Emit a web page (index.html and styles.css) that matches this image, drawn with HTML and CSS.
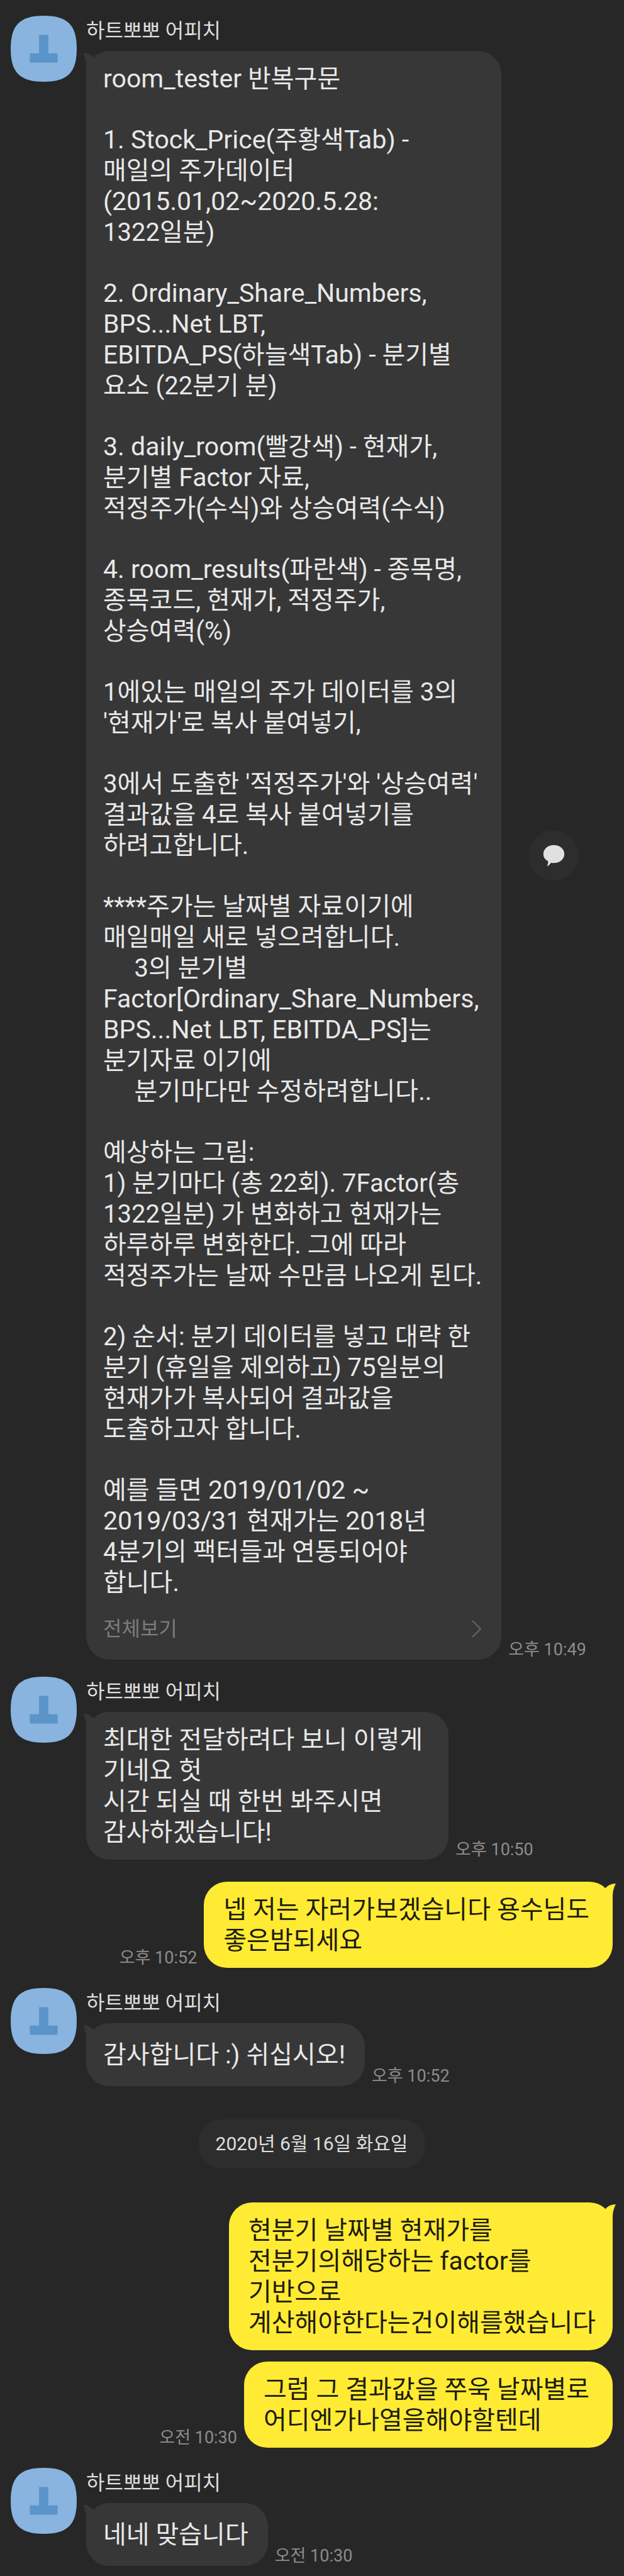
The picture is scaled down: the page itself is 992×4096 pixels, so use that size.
FILE: index.html
```html
<!DOCTYPE html>
<html lang="ko">
<head>
<meta charset="utf-8">
<meta name="viewport" content="width=device-width, initial-scale=1">
<title>하트뽀뽀 어피치</title>
<link rel="stylesheet" href="styles.css">
</head>
<body>
<svg class="defs" aria-hidden="true">
  <symbol id="avatar" viewBox="0 0 114 114">
    <path fill="#88b4df" d="M57 0C98 0 114 16 114 57S98 114 57 114 0 98 0 57 16 0 57 0Z"/>
    <path fill="#5b94c9" d="M49 33H65V65H81V81H33V65H49Z"/>
  </symbol>
  <symbol id="tail" viewBox="-6 0 24 40">
    <path fill="currentColor" d="M-5 3C2 3 8 6 11 10L16 38H0V24C0 15-2 9-5 3Z"/>
  </symbol>
</svg>
<main class="chat">
  <article class="message">
    <svg class="avatar" role="img" aria-label="프로필"><use href="#avatar"/></svg>
    <div class="content">
      <h2 class="name">하트뽀뽀 어피치</h2>
      <div class="line">
        <div class="bubble long">
          <svg class="tail" aria-hidden="true"><use href="#tail"/></svg>
          <div class="paragraphs">
            <p class="text"><span class="row"><span class="latin">room_tester</span> 반복구문</span></p>
            <p class="text"><span class="row"><span class="latin">1. Stock_Price(</span>주황색<span class="latin">Tab) -</span></span><span class="row">매일의 주가데이터</span><span class="row latin">(2015.01,02~2020.5.28:</span><span class="row">1322일분)</span></p>
            <p class="text"><span class="row latin">2. Ordinary_Share_Numbers,</span><span class="row latin">BPS...Net LBT,</span><span class="row"><span class="latin">EBITDA_PS(</span>하늘색<span class="latin">Tab) -</span> 분기별</span><span class="row">요소 (22분기 분)</span></p>
            <p class="text"><span class="row"><span class="latin">3. daily_room(</span>빨강색) - 현재가,</span><span class="row">분기별 <span class="latin">Factor</span> 자료,</span><span class="row">적정주가(수식)와 상승여력(수식)</span></p>
            <p class="text"><span class="row"><span class="latin">4. room_results(</span>파란색) - 종목명,</span><span class="row">종목코드, 현재가, 적정주가,</span><span class="row">상승여력(%)</span></p>
            <p class="text"><span class="row">1에있는 매일의 주가 데이터를 3의</span><span class="row">'현재가'로 복사 붙여넣기,</span></p>
            <p class="text"><span class="row">3에서 도출한 '적정주가'와 '상승여력'</span><span class="row">결과값을 4로 복사 붙여넣기를</span><span class="row">하려고합니다.</span></p>
            <p class="text"><span class="row">****주가는 날짜별 자료이기에</span><span class="row">매일매일 새로 넣으려합니다.</span><span class="row">     3의 분기별</span><span class="row latin">Factor[Ordinary_Share_Numbers,</span><span class="row"><span class="latin">BPS...Net LBT, EBITDA_PS]</span>는</span><span class="row">분기자료 이기에</span><span class="row">     분기마다만 수정하려합니다..</span></p>
            <p class="text"><span class="row">예상하는 그림:</span><span class="row">1) 분기마다 (총 22회). 7Factor(총</span><span class="row">1322일분) 가 변화하고 현재가는</span><span class="row">하루하루 변화한다. 그에 따라</span><span class="row">적정주가는 날짜 수만큼 나오게 된다.</span></p>
            <p class="text"><span class="row">2) 순서: 분기 데이터를 넣고 대략 한</span><span class="row">분기 (휴일을 제외하고) 75일분의</span><span class="row">현재가가 복사되어 결과값을</span><span class="row">도출하고자 합니다.</span></p>
            <p class="text"><span class="row">예를 들면 <span class="latin">2019/01/02 ~</span></span><span class="row"><span class="latin">2019/03/31</span> 현재가는 <span class="latin">2018</span>년</span><span class="row">4분기의 팩터들과 연동되어야</span><span class="row">합니다.</span></p>
          </div>
          <button class="more" type="button">
            <span>전체보기</span>
            <svg class="chevron" viewBox="0 0 16 28" aria-hidden="true"><path d="M1 1L14 14L1 27" fill="none" stroke="currentColor" stroke-width="2"/></svg>
          </button>
        </div>
        <div class="side">
          <button class="share" type="button" aria-label="공유">
            <svg class="balloon" viewBox="115 122 122 122" aria-hidden="true"><path fill="#e0e0e0" d="M176 128C207 128 231 148 231 175S207 222 176 222Q168 222 162 220Q153 232 143 238C141 238 141 237 142 234Q146 223 146 213Q121 200 121 175C121 148 145 128 176 128Z"/></svg>
          </button>
          <time class="time">오후 10:49</time>
        </div>
      </div>
    </div>
  </article>

  <article class="message">
    <svg class="avatar" role="img" aria-label="프로필"><use href="#avatar"/></svg>
    <div class="content">
      <h2 class="name">하트뽀뽀 어피치</h2>
      <div class="line">
        <div class="bubble">
          <svg class="tail" aria-hidden="true"><use href="#tail"/></svg>
          <p class="text"><span class="row">최대한 전달하려다 보니 이렇게 </span><span class="row">기네요 헛</span><span class="row">시간 되실 때 한번 봐주시면</span><span class="row">감사하겠습니다!</span></p>
        </div>
        <time class="time">오후 10:50</time>
      </div>
    </div>
  </article>

  <article class="line mine after-theirs">
    <div class="bubble">
      <svg class="tail" aria-hidden="true"><use href="#tail"/></svg>
      <p class="text"><span class="row">넵 저는 자러가보겠습니다 용수님도 </span><span class="row">좋은밤되세요</span></p>
    </div>
    <time class="time">오후 10:52</time>
  </article>

  <article class="message after-mine">
    <svg class="avatar" role="img" aria-label="프로필"><use href="#avatar"/></svg>
    <div class="content">
      <h2 class="name">하트뽀뽀 어피치</h2>
      <div class="line">
        <div class="bubble">
          <svg class="tail" aria-hidden="true"><use href="#tail"/></svg>
          <p class="text">감사합니다 :) 쉬십시오!</p>
        </div>
        <time class="time">오후 10:52</time>
      </div>
    </div>
  </article>

  <div class="date">2020년 6월 16일 화요일</div>

  <article class="line mine">
    <div class="bubble">
      <svg class="tail" aria-hidden="true"><use href="#tail"/></svg>
      <p class="text"><span class="row">현분기 날짜별 현재가를</span><span class="row">전분기의해당하는 <span class="latin">factor</span>를</span><span class="row">기반으로</span><span class="row">계산해야한다는건이해를했습니다</span></p>
    </div>
  </article>

  <article class="line mine continued">
    <div class="bubble">
      <p class="text"><span class="row">그럼 그 결과값을 쭈욱 날짜별로 </span><span class="row">어디엔가나열을해야할텐데</span></p>
    </div>
    <time class="time">오전 10:30</time>
  </article>

  <article class="message after-mine">
    <svg class="avatar" role="img" aria-label="프로필"><use href="#avatar"/></svg>
    <div class="content">
      <h2 class="name">하트뽀뽀 어피치</h2>
      <div class="line">
        <div class="bubble">
          <svg class="tail" aria-hidden="true"><use href="#tail"/></svg>
          <p class="text">네네 맞습니다</p>
        </div>
        <time class="time">오전 10:30</time>
      </div>
    </div>
  </article>
</main>
</body>
</html>
```
FILE: styles.css
```css
* {
  box-sizing: border-box;
}

body {
  margin: 0;
  background: #272727;
  color: #e8e8e8;
  font-family: Roboto, "Noto Sans CJK KR", sans-serif;
  font-size: 40px;
  line-height: 49px;
}

button {
  border: 0;
  padding: 0;
  background: none;
  color: inherit;
  font: inherit;
  cursor: pointer;
}

.defs {
  display: none;
}

.chat {
  display: flex;
  flex-direction: column;
  padding: 25px 18px 14px 17px;
}

/* Messages from the other person */
.message {
  display: flex;
  gap: 15px;
}

.message + .message {
  margin-top: 27px;
}

.after-mine {
  margin-top: 32px;
}

.avatar {
  flex: none;
  width: 105px;
  height: 105px;
}

.content {
  flex: 1;
  min-width: 0;
}

.name {
  margin: 0 0 8px;
  color: #dedede;
  font-size: 32px;
  font-weight: 400;
  line-height: 48px;
}

/* A bubble with its time beside it */
.line {
  display: flex;
  align-items: flex-end;
  gap: 11px;
}

.bubble {
  position: relative;
  display: flex;
  flex-direction: column;
  justify-content: center;
  min-width: 0;
  min-height: 100px;
  padding: 20px 31px 19px 27px;
  border-radius: 37px;
  background: #373737;
}

.text {
  margin: 0;
  white-space: break-spaces;
}

.row {
  display: block;
}

/* Latin runs are set a little larger than the Hangul around them */
.latin {
  font-size: 41px;
}

.row .latin {
  line-height: 1;
}

.tail {
  position: absolute;
  top: 0;
  left: -6px;
  width: 24px;
  height: 40px;
  color: #373737;
}

.time {
  flex: none;
  color: #8c8c8c;
  font-size: 27px;
  line-height: 32px;
}

/* Long message with its "view all" footer */
.long {
  padding-bottom: 0;
}

.paragraphs {
  display: flex;
  flex-direction: column;
  gap: 48px;
}

.more {
  display: flex;
  align-items: center;
  justify-content: space-between;
  height: 98px;
  color: #7c7c7c;
  font-size: 32px;
}

.chevron {
  width: 16px;
  height: 28px;
  color: #666;
}

.side {
  display: grid;
  align-self: stretch;
}

.side > * {
  grid-area: 1 / 1;
}

.side .time {
  align-self: end;
}

.share {
  display: grid;
  place-items: center;
  align-self: center;
  width: 80px;
  height: 80px;
  margin-left: 32px;
  border-radius: 50%;
  background: #2d2d2d;
}

.balloon {
  width: 37px;
  height: 37px;
}

/* Own messages */
.mine {
  flex-direction: row-reverse;
}

.mine .bubble {
  padding-right: 27px;
  padding-left: 31px;
  background: #ffeb33;
  color: #1e1c10;
}

.mine .tail {
  right: -6px;
  left: auto;
  color: #ffeb33;
  transform: scaleX(-1);
}

.after-theirs {
  margin-top: 35px;
}

.continued {
  margin-top: 18px;
}

.date {
  align-self: center;
  margin: 53px 0 54px;
  padding: 15px 28px;
  border-radius: 37px;
  background: #2d2d2d;
  color: #dedede;
  font-size: 30px;
  line-height: 48px;
}
```
